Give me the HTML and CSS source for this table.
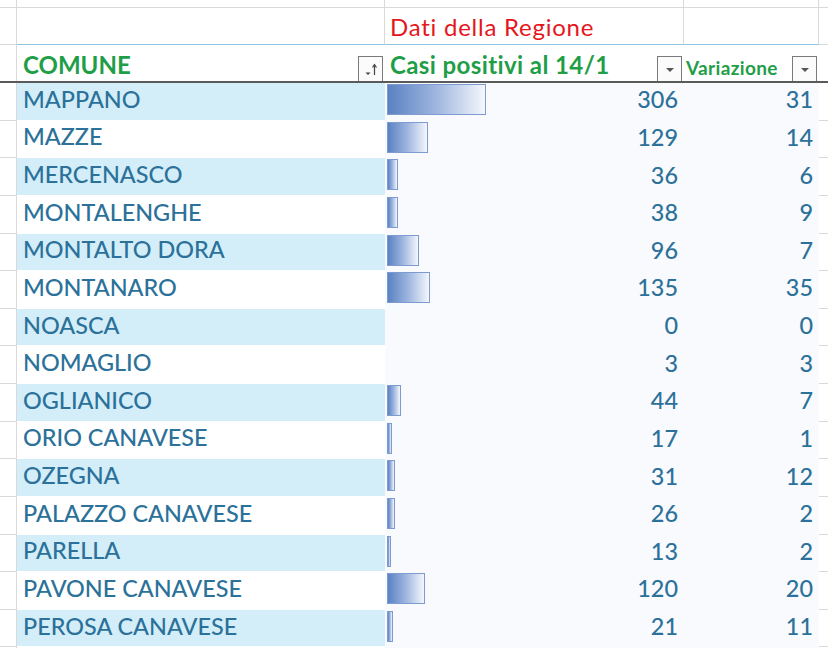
FILE: index.html
```html
<!DOCTYPE html>
<html lang="it">
<head>
<meta charset="utf-8">
<title>Casi positivi</title>
<link rel="stylesheet" href="styles.css">
</head>
<body>
<div class="sheet">
  <div class="row r-top">
    <div class="c0"></div><div class="ca"></div><div class="cb"></div><div class="cc"></div><div class="cd"></div>
  </div>
  <div class="row r-title">
    <div class="c0"></div><div class="ca"></div>
    <div class="cb"><span class="title">Dati della Regione</span></div>
    <div class="cc"></div><div class="cd"></div>
  </div>
  <div class="row r-head">
    <div class="c0"></div>
    <div class="ca"><span class="hname">COMUNE</span>
      <span class="fbtn"><svg width="20" height="20" viewBox="0 0 20 20"><path d="M4.5 13.5h5l-2.5 2.5z" fill="#444"/><path d="M13.5 16V6M11.5 8.5L13.5 5.5l2 3" stroke="#444" stroke-width="1.2" fill="none"/></svg></span>
    </div>
    <div class="cb"><span class="hname wide">Casi positivi al 14/1</span>
      <span class="fbtn"><svg width="20" height="20" viewBox="0 0 20 20"><path d="M6 9h8l-4 4z" fill="#555"/></svg></span>
    </div>
    <div class="cc"><span class="hname small">Variazione</span>
      <span class="fbtn"><svg width="20" height="20" viewBox="0 0 20 20"><path d="M6 9h8l-4 4z" fill="#555"/></svg></span>
    </div>
    <div class="cd"></div>
  </div>

  <div class="row data band"><div class="c0"></div><div class="ca">MAPPANO</div><div class="cb"><span class="bar" style="width:99px"></span><span class="num">306</span></div><div class="cc"><span class="num">31</span></div><div class="cd"></div></div>
  <div class="row data"><div class="c0"></div><div class="ca">MAZZE</div><div class="cb"><span class="bar" style="width:41px"></span><span class="num">129</span></div><div class="cc"><span class="num">14</span></div><div class="cd"></div></div>
  <div class="row data band"><div class="c0"></div><div class="ca">MERCENASCO</div><div class="cb"><span class="bar" style="width:11px"></span><span class="num">36</span></div><div class="cc"><span class="num">6</span></div><div class="cd"></div></div>
  <div class="row data"><div class="c0"></div><div class="ca">MONTALENGHE</div><div class="cb"><span class="bar" style="width:11px"></span><span class="num">38</span></div><div class="cc"><span class="num">9</span></div><div class="cd"></div></div>
  <div class="row data band"><div class="c0"></div><div class="ca">MONTALTO DORA</div><div class="cb"><span class="bar" style="width:32px"></span><span class="num">96</span></div><div class="cc"><span class="num">7</span></div><div class="cd"></div></div>
  <div class="row data"><div class="c0"></div><div class="ca">MONTANARO</div><div class="cb"><span class="bar" style="width:43px"></span><span class="num">135</span></div><div class="cc"><span class="num">35</span></div><div class="cd"></div></div>
  <div class="row data band"><div class="c0"></div><div class="ca">NOASCA</div><div class="cb"><span class="num">0</span></div><div class="cc"><span class="num">0</span></div><div class="cd"></div></div>
  <div class="row data"><div class="c0"></div><div class="ca">NOMAGLIO</div><div class="cb"><span class="num">3</span></div><div class="cc"><span class="num">3</span></div><div class="cd"></div></div>
  <div class="row data band"><div class="c0"></div><div class="ca">OGLIANICO</div><div class="cb"><span class="bar" style="width:14px"></span><span class="num">44</span></div><div class="cc"><span class="num">7</span></div><div class="cd"></div></div>
  <div class="row data"><div class="c0"></div><div class="ca">ORIO CANAVESE</div><div class="cb"><span class="bar" style="width:5px"></span><span class="num">17</span></div><div class="cc"><span class="num">1</span></div><div class="cd"></div></div>
  <div class="row data band"><div class="c0"></div><div class="ca">OZEGNA</div><div class="cb"><span class="bar" style="width:8px"></span><span class="num">31</span></div><div class="cc"><span class="num">12</span></div><div class="cd"></div></div>
  <div class="row data"><div class="c0"></div><div class="ca">PALAZZO CANAVESE</div><div class="cb"><span class="bar" style="width:8px"></span><span class="num">26</span></div><div class="cc"><span class="num">2</span></div><div class="cd"></div></div>
  <div class="row data band"><div class="c0"></div><div class="ca">PARELLA</div><div class="cb"><span class="bar" style="width:4px"></span><span class="num">13</span></div><div class="cc"><span class="num">2</span></div><div class="cd"></div></div>
  <div class="row data"><div class="c0"></div><div class="ca">PAVONE CANAVESE</div><div class="cb"><span class="bar" style="width:38px"></span><span class="num">120</span></div><div class="cc"><span class="num">20</span></div><div class="cd"></div></div>
  <div class="row data band"><div class="c0"></div><div class="ca">PEROSA CANAVESE</div><div class="cb"><span class="bar" style="width:6px"></span><span class="num">21</span></div><div class="cc"><span class="num">11</span></div><div class="cd"></div></div>
  <div class="row data"><div class="c0"></div><div class="ca"></div><div class="cb"><span class="bar" style="width:6px"></span></div><div class="cc"></div><div class="cd"></div></div>
</div>
</body>
</html>
```

FILE: styles.css
```css
html, body {
  margin: 0;
  padding: 0;
  background: #ffffff;
  overflow: hidden;
}
body {
  width: 828px;
  height: 648px;
  font-family: Lato, "Noto Sans", sans-serif;
}
.sheet {
  display: flex;
  flex-direction: column;
}
.row {
  display: grid;
  grid-template-columns: 17px 368px 299px 135px 1fr;
}
.row > div {
  box-sizing: border-box;
}
.c0 {
  border-right: 1px solid #d9d9d9;
  border-bottom: 1px solid #d9d9d9;
}
.cd {
  border-bottom: 1px solid #d9d9d9;
}

/* top partial row */
.r-top { height: 8px; }
.r-top .ca, .r-top .cb, .r-top .cc {
  border-right: 1px solid #d9d9d9;
  border-bottom: 1px solid #d9d9d9;
}

/* title row */
.r-title { height: 37px; }
.r-title .ca, .r-title .cb, .r-title .cc {
  border-right: 1px solid #d9d9d9;
  border-bottom: 1px solid #8ec6e0;
}
.r-title .cb {
  display: flex;
  align-items: flex-end;
  padding: 0 0 4px 5px;
}
.title {
  color: #e5161d;
  font-size: 24px;
  line-height: 26px;
  letter-spacing: 0.75px;
}

/* header row */
.r-head {
  height: 36px;
  border-bottom: 2px solid #5a5a5a;
}
.r-head .c0, .r-head .cd { border-bottom: none; }
.r-head .ca, .r-head .cb, .r-head .cc {
  display: flex;
  align-items: flex-end;
  justify-content: space-between;
  padding: 0 2px 0 6px;
}
.r-head .cb { padding-left: 5px; }
.r-head .cc { padding-left: 2px; }
.hname {
  color: #1f9e48;
  font-weight: 700;
  font-size: 24px;
  line-height: 26px;
  padding-bottom: 3px;
}
.hname.wide {
  letter-spacing: 0.4px;
}
.hname.small {
  font-size: 19px;
  line-height: 20px;
  letter-spacing: 0.35px;
  padding-bottom: 3px;
}
.fbtn {
  width: 25px;
  height: 25px;
  box-sizing: border-box;
  border: 1.5px solid #7a7a7a;
  border-bottom: none;
  background: #fbfbfb;
  display: flex;
  align-items: center;
  justify-content: center;
}

/* data rows */
.data {
  height: 37.64px;
  color: #2b7199;
  font-size: 23.4px;
  font-weight: 500;
}
.data .ca {
  display: flex;
  align-items: center;
  padding: 0 0 5px 6px;
  border-bottom: 1px solid #ffffff;
}
.data.band .ca {
  background: #d3eef9;
}
.data .cb, .data .cc {
  background: #f9fafe;
  display: flex;
  align-items: center;
  padding-right: 6px;
}
.data .cb { padding-left: 2px; }
.bar {
  align-self: flex-start;
  margin-top: 1px;
  height: 31px;
  box-sizing: border-box;
  border: 1px solid #7d9bd0;
  background: linear-gradient(to right, #5a82c3 0%, #9fb6df 50%, #f4f7fc 100%);
}
.num {
  margin-left: auto;
  padding-bottom: 5px;
}
```
